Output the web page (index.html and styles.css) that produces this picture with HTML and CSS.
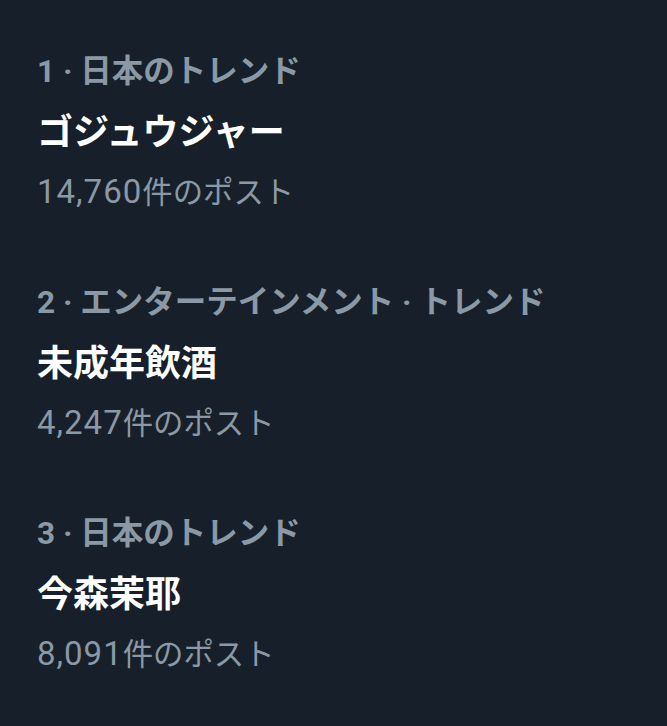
FILE: index.html
```html
<!DOCTYPE html>
<html lang="ja">
<head>
<meta charset="utf-8">
<link rel="stylesheet" href="styles.css">
</head>
<body>
<div class="list">
  <div class="trend">
    <div class="cat">1 · 日本のトレンド</div>
    <div class="title">ゴジュウジャー</div>
    <div class="count"><span class="num">14,760</span>件のポスト</div>
  </div>
  <div class="trend">
    <div class="cat">2 · エンターテインメント · トレンド</div>
    <div class="title">未成年飲酒</div>
    <div class="count"><span class="num">4,247</span>件のポスト</div>
  </div>
  <div class="trend">
    <div class="cat">3 · 日本のトレンド</div>
    <div class="title">今森茉耶</div>
    <div class="count"><span class="num">8,091</span>件のポスト</div>
  </div>
</div>
</body>
</html>
```
FILE: styles.css
```css
html, body {
  margin: 0;
  padding: 0;
  background: #17202a;
  height: 100%;
}
body {
  font-family: Roboto, "Noto Sans CJK JP", sans-serif;
}
.list {
  display: flex;
  flex-direction: column;
  padding: 50px 0 0 37px;
}
.trend {
  height: 231px;
  display: flex;
  flex-direction: column;
}
.cat {
  color: #8b98a5;
  font-size: 31.5px;
  font-weight: 700;
  line-height: 44px;
}
.title {
  color: #ffffff;
  font-size: 36px;
  font-weight: 700;
  line-height: 44px;
  margin-top: 17px;
}
.count {
  color: #8b98a5;
  font-size: 30.4px;
  font-weight: 400;
  line-height: 44px;
  margin-top: 15px;
}
.num {
  font-size: 33px;
  letter-spacing: 1px;
}
```
